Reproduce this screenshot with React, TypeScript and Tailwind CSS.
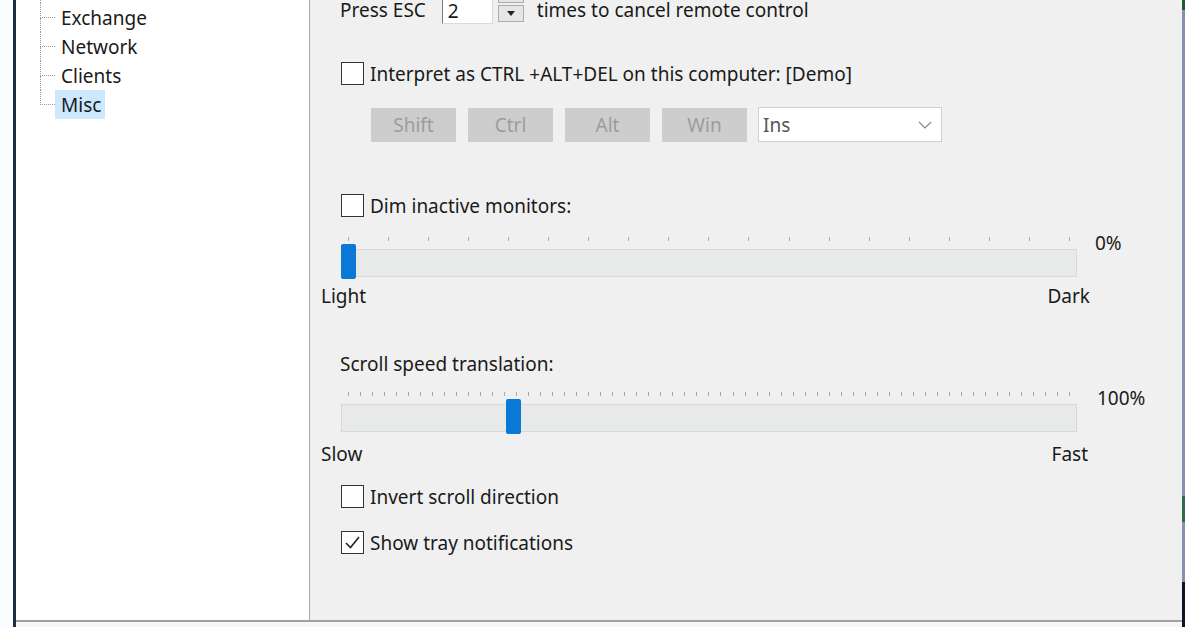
import type { ReactNode } from "react";

const font = { fontFamily: '"Noto Sans", "Open Sans", sans-serif' };

function TreeRow({ label, last, selected }: { label: string; last?: boolean; selected?: boolean }) {
  return (
    <div className="flex h-[29px] items-stretch">
      <div className="flex w-[15px] flex-col">
        <div className="h-1/2 border-b border-l border-dotted border-[#9a9a9a]" />
        <div className={last ? "h-1/2" : "h-1/2 border-l border-dotted border-[#9a9a9a]"} />
      </div>
      <div className={"flex items-center pl-[6px] pr-[4px] " + (selected ? "bg-[#cce8ff]" : "")}>{label}</div>
    </div>
  );
}

function Check({ checked }: { checked?: boolean }) {
  return (
    <div className="flex h-[23px] w-[23px] items-center justify-center border border-[#333] bg-white">
      {checked && (
        <svg width="19" height="19" viewBox="0 0 19 19">
          <polyline points="3,10 7.5,14.5 16,4" fill="none" stroke="#222" strokeWidth="1.6" />
        </svg>
      )}
    </div>
  );
}

function CheckRow({ checked, children, className }: { checked?: boolean; children: ReactNode; className: string }) {
  return (
    <div className={"flex h-[23px] items-center gap-[6px] " + className}>
      <Check checked={checked} />
      <span>{children}</span>
    </div>
  );
}

function Slider({ ticks, pos, label, labelGap }: { ticks: number; pos: number; label: string; labelGap: string }) {
  return (
    <div className="flex items-start">
      <div className="w-[736px] pt-[6px]">
        <div className="flex h-[4px] justify-between px-[7px]">
          {Array.from({ length: ticks }).map((_, i) => (
            <div key={i} className="h-[4px] w-px bg-[#a8a8a8]" />
          ))}
        </div>
        <div className="relative mt-[8px] h-[28px] border border-[#d8d8d8] bg-[#e8eaea]">
          <div className="absolute top-[-6px] h-[35px] w-[15px] rounded-[2px] bg-[#0a78d7]" style={{ left: pos }} />
        </div>
      </div>
      <span className={labelGap}>{label}</span>
    </div>
  );
}

function Btn({ label }: { label: string }) {
  return (
    <div className="flex h-[34px] w-[85px] items-center justify-center bg-[#cdcdcd] text-[#9c9c9c]">{label}</div>
  );
}

export default function App() {
  return (
    <div className="flex h-[627px] w-[1200px] overflow-hidden bg-[#fbfcfd] text-[19px] leading-[24px] text-[#1a1a1a]" style={font}>
      <div className="w-[13px]" />
      <div className="w-[3px] bg-[#1b2c46]" />
      <div className="flex flex-1 flex-col">
        <div className="flex h-[620px]">
          <div className="w-[294px] border-r border-[#a8a8a8] bg-white pl-[24px]">
            <div className="h-[3px] border-l border-dotted border-[#9a9a9a]" />
            <TreeRow label="Exchange" />
            <TreeRow label="Network" />
            <TreeRow label="Clients" />
            <TreeRow label="Misc" last selected />
          </div>
          <div className="flex flex-1 flex-col bg-[#f0f0f0] pl-[31px]">
            <div className="flex h-[24px] items-start">
              <span className="-ml-[1px] leading-[20px]">Press ESC</span>
              <div className="-mt-[5px] ml-[16px] flex h-[29px] w-[51px] items-end border border-[#7a7a7a] border-b-[#dadada] border-r-[#dadada] bg-white pb-[1px] pl-[5px] leading-[22px]">
                2
              </div>
              <div className="-mt-[13px] ml-[5px] flex w-[26px] flex-col gap-[2px]">
                <div className="h-[16px] border border-[#adadad] bg-[#e5e5e5]" />
                <div className="flex h-[17px] items-center justify-center border border-[#adadad] bg-[#e5e5e5]">
                  <svg width="8" height="5" viewBox="0 0 8 5">
                    <polygon points="0,0 8,0 4,5" fill="#222" />
                  </svg>
                </div>
              </div>
              <span className="ml-[13px] leading-[20px]">times to cancel remote control</span>
            </div>

            <CheckRow className="mt-[38px]">Interpret as CTRL +ALT+DEL on this computer: [Demo]</CheckRow>

            <div className="ml-[30px] mt-[22px] flex items-center gap-[12px]">
              <Btn label="Shift" />
              <Btn label="Ctrl" />
              <Btn label="Alt" />
              <Btn label="Win" />
              <div className="-ml-[1px] flex h-[35px] w-[184px] items-center justify-between border border-[#d0d0d0] bg-white pl-[4px] pr-[9px]">
                <span className="text-[#555]">Ins</span>
                <svg width="14" height="8" viewBox="0 0 14 8">
                  <polyline points="1,1 7,7 13,1" fill="none" stroke="#8a8a8a" strokeWidth="1.2" />
                </svg>
              </div>
            </div>

            <CheckRow className="mt-[52px]">Dim inactive monitors:</CheckRow>

            <div className="mt-[14px]">
              <Slider ticks={19} pos={-1} label="0%" labelGap="ml-[18px]" />
            </div>
            <div className="-ml-[20px] mt-[7px] flex w-[769px] justify-between">
              <span>Light</span>
              <span>Dark</span>
            </div>

            <div className="-ml-[1px] mt-[44px]">Scroll speed translation:</div>

            <div className="mt-[10px]">
              <Slider ticks={61} pos={164} label="100%" labelGap="ml-[20px]" />
            </div>
            <div className="-ml-[20px] mt-[10px] flex w-[767px] justify-between">
              <span>Slow</span>
              <span>Fast</span>
            </div>

            <CheckRow className="mt-[19px]">Invert scroll direction</CheckRow>
            <CheckRow className="mt-[23px]" checked>
              Show tray notifications
            </CheckRow>
          </div>
        </div>
        <div className="h-[2px] bg-[#a0a0a0]" />
        <div className="flex-1 bg-[#f7f7f7]" />
      </div>
      <div className="flex w-[3px] flex-col">
        <div className="h-[10px] bg-[#1f5a3e]" />
        <div className="h-[486px] bg-[#8790b0]" />
        <div className="h-[26px] bg-[#2d6b4a]" />
        <div className="h-[60px] bg-[#8790b0]" />
        <div className="flex-1 bg-[#0c1426]" />
      </div>
      <div className="w-[15px] bg-white" />
    </div>
  );
}
